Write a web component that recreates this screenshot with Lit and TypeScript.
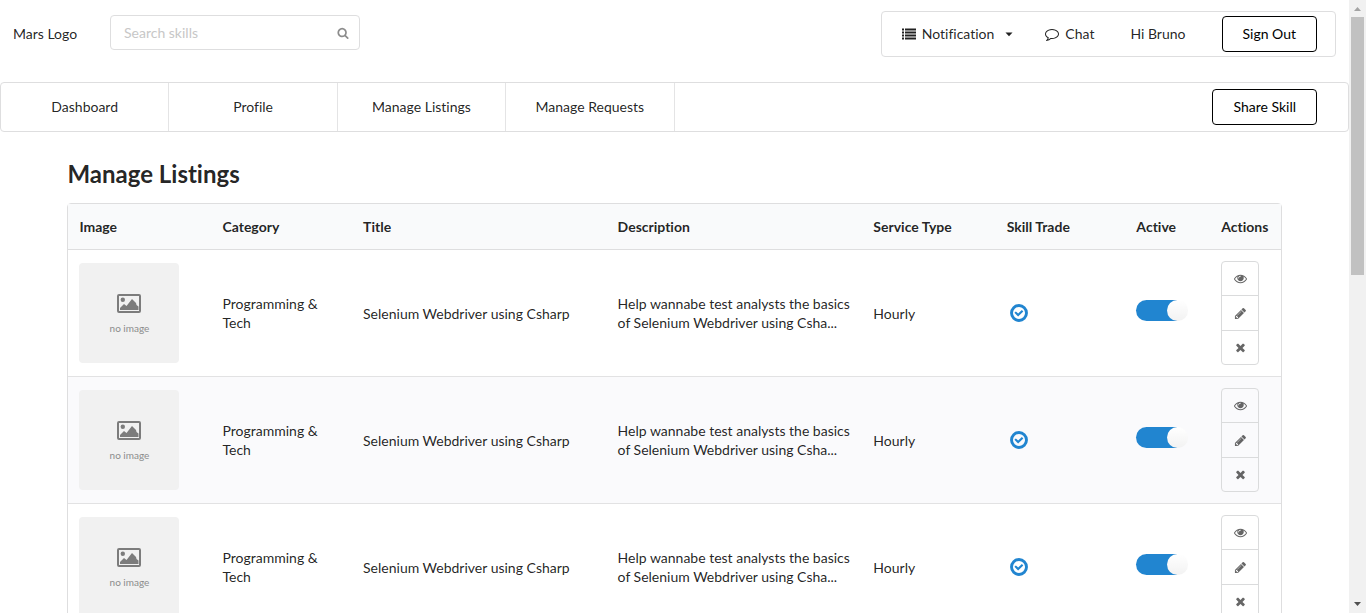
import { LitElement, html, css, svg } from "lit";
import { customElement, property } from "lit/decorators.js";

const glyphs = {
  search: svg`<path d="M1216 832q0-185-131.5-316.5t-316.5-131.5-316.5 131.5-131.5 316.5 131.5 316.5 316.5 131.5 316.5-131.5 131.5-316.5zm512 832q0 52-38 90t-90 38q-54 0-90-38l-343-342q-179 124-399 124-143 0-273.5-55.5t-225-150-150-225-55.5-273.5 55.5-273.5 150-225 225-150 273.5-55.5 273.5 55.5 225 150 150 225 55.5 273.5q0 220-124 399l343 343q37 37 37 90z"/>`,
  list: svg`<path d="M0 180h256v256H0zM0 564h256v256H0zM0 948h256v256H0zM0 1332h256v256H0zM384 180h1408v256H384zM384 564h1408v256H384zM384 948h1408v256H384zM384 1332h1408v256H384z"/>`,
  comment: svg`<path d="M896 384q-204 0-381.5 69.5t-282 187.5-104.5 255q0 112 71.5 213.5t201.5 175.5l87 50-27 96q-24 91-70 172 152-63 275-171l43-38 57 6q69 8 130 8 204 0 381.5-69.5t282-187.5 104.5-255-104.5-255-282-187.5-381.5-69.5zm896 512q0 174-120 321.5t-326 233-450 85.5q-70 0-145-8-198 175-460 242-49 14-114 22h-5q-15 0-27-10.5t-16-27.5v-1q-3-4-.5-12t2-10 4.5-9.5l6-9 7-8.5 8-9q7-8 31-34.5t34.5-38 31-39.5 32.5-51 27-59 26-76q-157-89-247.5-220t-90.5-281q0-174 120-321.5t326-233 450-85.5 450 85.5 326 233 120 321.5z"/>`,
  eye: svg`<path d="M1664 960q-152-236-381-353 61 104 61 225 0 185-131.5 316.5t-316.5 131.5-316.5-131.5-131.5-316.5q0-121 61-225-229 117-381 353 133 205 333.5 326.5t434.5 121.5 434.5-121.5 333.5-326.5zm-720-384q0-20-14-34t-34-14q-125 0-214.5 89.5t-89.5 214.5q0 20 14 34t34 14 34-14 14-34q0-86 61-147t147-61q20 0 34-14t14-34zm848 384q0 34-20 69-140 230-376.5 368.5t-499.5 138.5-499.5-139-376.5-368q-20-35-20-69t20-69q140-229 376.5-368t499.5-139 499.5 139 376.5 368q20 35 20 69z"/>`,
  pencil: svg`<path d="M491 1536l91-91-235-235-91 91v107h128v128h107zm523-928q0-22-22-22-10 0-17 7l-542 542q-7 7-7 17 0 22 22 22 10 0 17-7l542-542q7-7 7-17zm-54-192l416 416-832 832h-416v-416zm683 96q0 53-37 90l-166 166-416-416 166-165q36-38 90-38 53 0 91 38l235 234q37 39 37 91z"/>`,
  close: svg`<path d="M1490 1322q0 40-28 68l-136 136q-28 28-68 28t-68-28l-294-294-294 294q-28 28-68 28t-68-28l-136-136q-28-28-28-68t28-68l294-294-294-294q-28-28-28-68t28-68l136-136q28-28 68-28t68 28l294 294 294-294q28-28 68-28t68 28l136 136q28 28 28 68t-28 68l-294 294 294 294q28 28 28 68z"/>`,
  caret: svg`<path d="M448 704h896l-448 480z"/>`,
  check: svg`<circle cx="896" cy="896" r="745" fill="none" stroke="currentColor" stroke-width="290"/><path d="M440 880l140-140 230 200 370-340 145 145-515 510z"/>`,
};

@customElement("ui-icon")
class UiIcon extends LitElement {
  @property() name: keyof typeof glyphs = "search";

  static styles = css`
    :host {
      display: inline-block;
      flex: none;
      width: 14px;
      height: 14px;
    }
    svg {
      display: block;
      width: 100%;
      height: 100%;
      fill: currentColor;
    }
  `;

  render() {
    return html`<svg viewBox="0 0 1792 1792" aria-hidden="true">${glyphs[this.name]}</svg>`;
  }
}

interface Listing {
  category: string;
  title: string;
  description: string;
  serviceType: string;
  active: boolean;
}

const listings: Listing[] = Array.from({ length: 3 }, () => ({
  category: "Programming & Tech",
  title: "Selenium Webdriver using Csharp",
  description: "Help wannabe test analysts the basics of Selenium Webdriver using Csha...",
  serviceType: "Hourly",
  active: true,
}));

const sections = ["Dashboard", "Profile", "Manage Listings", "Manage Requests"];

@customElement("app-root")
class AppRoot extends LitElement {
  static styles = css`
    :host {
      display: flex;
      height: 100vh;
      overflow: hidden;
      background: #fff;
      color: rgba(0, 0, 0, 0.87);
      font: 14px/19px Lato, "Open Sans", sans-serif;
      font-variant-ligatures: none;
    }
    * {
      box-sizing: border-box;
    }
    a {
      color: inherit;
      text-decoration: none;
    }
    button,
    input {
      font: inherit;
      font-variant-ligatures: none;
      color: inherit;
      margin: 0;
    }
    .page {
      flex: 1;
      min-width: 0;
      overflow-y: auto;
      scrollbar-width: none;
    }
    .top {
      display: flex;
      align-items: flex-start;
      padding: 11px 13px;
      margin-bottom: 14px;
    }
    .logo {
      width: 97px;
      padding-top: 13px;
    }
    .search {
      display: flex;
      align-items: center;
      width: 250px;
      height: 35px;
      margin-top: 4px;
      padding: 0 10px 0 13px;
      border: 1px solid #dededf;
      border-radius: 4px;
      color: rgba(0, 0, 0, 0.45);
    }
    .search input {
      flex: 1;
      min-width: 0;
      padding: 0;
      border: 0;
      outline: 0;
      background: none;
    }
    .search input::placeholder {
      color: #c7c7c7;
      opacity: 1;
    }
    .search ui-icon {
      width: 12px;
      height: 12px;
    }
    .account {
      display: flex;
      align-items: center;
      height: 46px;
      margin-left: auto;
      padding: 0 18px;
      border: 1px solid #dededf;
      border-radius: 4px;
    }
    .link {
      display: flex;
      align-items: center;
      gap: 6px;
      padding: 0;
      border: 0;
      background: none;
      line-height: 20px;
    }
    .notify {
      margin-right: 29px;
      padding-left: 2px;
    }
    .arrow {
      margin-left: 2px;
    }
    .chat {
      margin-right: 36px;
    }
    .hello {
      margin-right: 36px;
      line-height: 20px;
    }
    .outlined {
      height: 36px;
      padding: 0 20px;
      border: 1px solid #000;
      border-radius: 4px;
      background: #fff;
      color: #000;
      line-height: 34px;
      white-space: nowrap;
    }
    .sections {
      display: flex;
      align-items: center;
      height: 50px;
      border: 1px solid #dededf;
      border-radius: 4px;
    }
    .section {
      width: 12.5%;
      line-height: 48px;
      text-align: center;
      border-right: 1px solid #e4e4e5;
    }
    .share {
      margin: 0 31px 0 auto;
    }
    .content {
      width: 90%;
      margin: 26px auto 0;
    }
    h2 {
      margin: 0 0 13px;
      font-size: 24px;
      line-height: 32px;
      font-weight: 700;
    }
    table {
      width: 100%;
      table-layout: fixed;
      border: 1px solid #dededf;
      border-radius: 4px;
      border-collapse: separate;
      border-spacing: 0;
      text-align: left;
    }
    th {
      height: 46px;
      padding: 0 11px;
      background: #f9fafb;
      border-bottom: 1px solid #dededf;
      font-weight: 700;
      white-space: nowrap;
    }
    td {
      padding: 11px;
      border-bottom: 1px solid #e2e2e3;
      vertical-align: middle;
    }
    tbody tr:nth-child(even) {
      background: #fafafc;
    }
    .c1 { width: 11.8%; }
    .c2 { width: 11.6%; }
    .c3 { width: 21%; }
    .c4 { width: 21.1%; }
    .c5 { width: 11%; }
    .c6 { width: 10.7%; }
    .c7 { width: 7%; }
    .thumb {
      display: flex;
      flex-direction: column;
      align-items: center;
      gap: 7px;
      width: 100px;
      height: 100px;
      padding-top: 31px;
      border-radius: 4px;
      background: #f1f1f1;
      color: #8c8c8c;
      font-size: 10px;
      line-height: 14px;
    }
    .thumb svg {
      width: 24px;
      height: 20px;
      color: #7c7c7c;
    }
    .traded {
      display: block;
      width: 18px;
      height: 18px;
      margin-left: 3px;
      color: #2185d0;
    }
    .toggle {
      appearance: none;
      display: flex;
      width: 52px;
      height: 21px;
      margin-bottom: 5px;
      border-radius: 11px;
      background: linear-gradient(90deg, #2185d0 41px, transparent 41px);
      cursor: pointer;
    }
    .toggle::before {
      content: "";
      width: 21px;
      height: 21px;
      margin-left: auto;
      border-radius: 50%;
      background: #fff linear-gradient(transparent, rgba(0, 0, 0, 0.05));
    }
    .toggle:not(:checked) {
      background: #e0e0e0;
    }
    .toggle:not(:checked)::before {
      margin-left: 0;
    }
    .actions {
      display: grid;
      grid-template-rows: 34px 35px 33px;
      width: 38px;
      border: 1px solid #dadbdc;
      border-radius: 4px;
    }
    .action {
      display: grid;
      place-items: center;
      padding: 0;
      border: 0;
      border-bottom: 1px solid #dadbdc;
      background: none;
      color: rgba(0, 0, 0, 0.6);
    }
    .action:last-child {
      border-bottom: 0;
    }
    .action ui-icon {
      width: 13px;
      height: 13px;
    }
    .scrollbar {
      display: flex;
      flex-direction: column;
      align-items: center;
      width: 17px;
      background: #f1f1f1;
    }
    .scrollbar svg {
      flex: none;
      width: 17px;
      height: 17px;
    }
    .track {
      flex: 1;
      width: 13px;
    }
    .thumb-bar {
      height: 44.6%;
      background: #c1c1c1;
    }
  `;

  private row(item: Listing, index: number) {
    return html`
      <tr>
        <td>
          <div class="thumb">
            <svg viewBox="0 0 24 20" aria-hidden="true">
              <rect x="1" y="1" width="22" height="17" rx="1" fill="none" stroke="currentColor" stroke-width="2" />
              <circle cx="5.8" cy="5.8" r="2.2" fill="currentColor" />
              <path d="M3 16v-2l4-4 2.5 2L15 5l4 4 .5 2 2 1.500V16z" fill="currentColor" />
            </svg>
            <span>no image</span>
          </div>
        </td>
        <td>${item.category}</td>
        <td>${item.title}</td>
        <td>${item.description}</td>
        <td>${item.serviceType}</td>
        <td><ui-icon class="traded" name="check"></ui-icon></td>
        <td>
          <input class="toggle" type="checkbox" role="switch" aria-label="Listing ${index + 1} active" .checked=${item.active} />
        </td>
        <td>
          <div class="actions">
            <button class="action" aria-label="View"><ui-icon name="eye"></ui-icon></button>
            <button class="action" aria-label="Edit"><ui-icon name="pencil"></ui-icon></button>
            <button class="action" aria-label="Delete"><ui-icon name="close"></ui-icon></button>
          </div>
        </td>
      </tr>
    `;
  }

  render() {
    return html`
      <div class="page">
        <header class="top">
          <a class="logo" href="#">Mars Logo</a>
          <label class="search">
            <input type="text" placeholder="Search skills" aria-label="Search skills" />
            <ui-icon name="search"></ui-icon>
          </label>
          <div class="account">
            <button class="link notify">
              <ui-icon name="list"></ui-icon>Notification<ui-icon class="arrow" name="caret"></ui-icon>
            </button>
            <a class="link chat" href="#"><ui-icon name="comment"></ui-icon>Chat</a>
            <span class="hello">Hi Bruno</span>
            <button class="outlined">Sign Out</button>
          </div>
        </header>
        <nav class="sections">
          ${sections.map((s) => html`<a class="section" href="#">${s}</a>`)}
          <button class="outlined share">Share Skill</button>
        </nav>
        <main class="content">
          <h2>Manage Listings</h2>
          <table>
            <thead>
              <tr>
                <th class="c1">Image</th>
                <th class="c2">Category</th>
                <th class="c3">Title</th>
                <th class="c4">Description</th>
                <th class="c5">Service Type</th>
                <th class="c6">Skill Trade</th>
                <th class="c7">Active</th>
                <th>Actions</th>
              </tr>
            </thead>
            <tbody>
              ${listings.map((item, i) => this.row(item, i))}
            </tbody>
          </table>
        </main>
      </div>
      <div class="scrollbar" aria-hidden="true">
        <svg viewBox="0 0 17 17"><path d="M5 11l3.500-4 3.500 4z" fill="#a3a3a3" /></svg>
        <div class="track"><div class="thumb-bar"></div></div>
        <svg viewBox="0 0 17 17"><path d="M5 6l3.500 4 3.500-4z" fill="#505050" /></svg>
      </div>
    `;
  }
}
